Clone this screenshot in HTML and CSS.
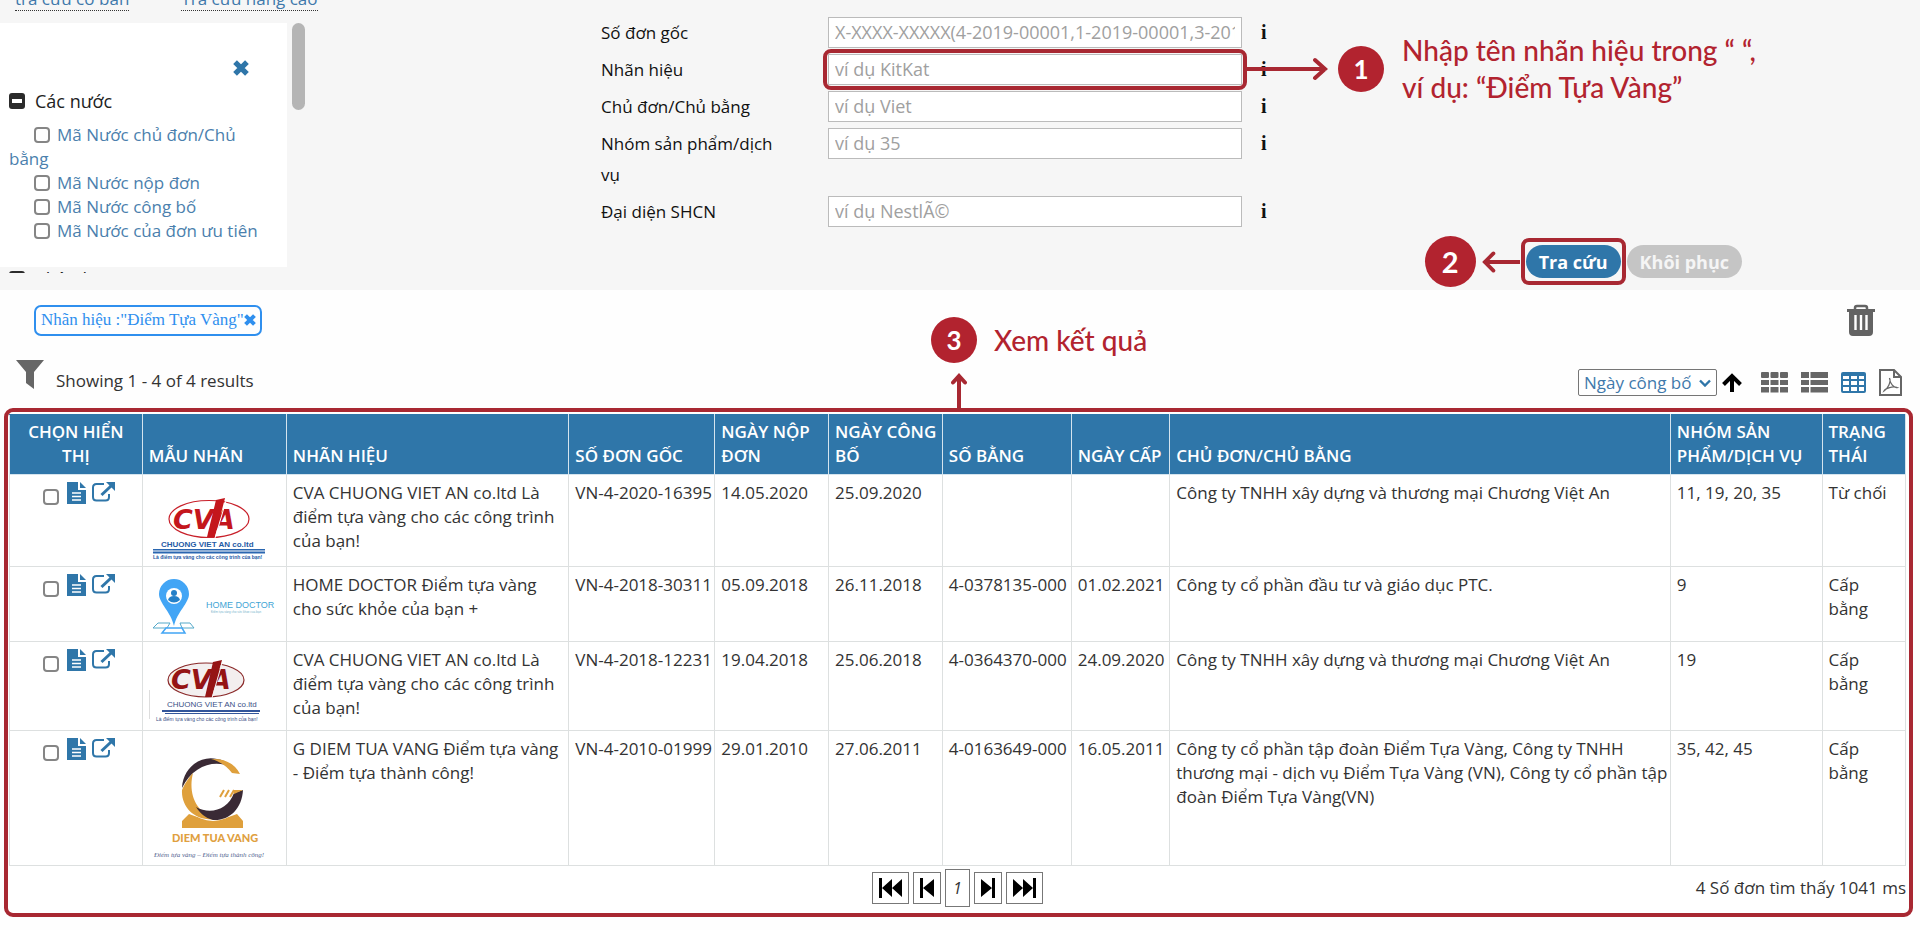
FILE: index.html
```html
<!DOCTYPE html>
<html lang="vi">
<head>
<meta charset="utf-8">
<title>Tra cứu nhãn hiệu</title>
<link rel="stylesheet" href="styles.css">
</head>
<body>
<svg class="defs" aria-hidden="true">
  <symbol id="doc" viewBox="0 0 19 22"><path fill="#2f76a9" d="M0 0h11v8h8v14H0z"/><path fill="#2f76a9" d="M13 0l6 6h-6z"/><path stroke="#fff" stroke-width="1.6" d="M5 11h9M5 14.500h9M5 18h9"/></symbol>
  <symbol id="open" viewBox="0 0 23 20"><path fill="none" stroke="#2f76a9" stroke-width="2" d="M12 2H4.500Q1 2 1 5.500v9.500Q1 18.500 4.500 18.500h9Q17 18.500 17 15v-3"/><path stroke="#2f76a9" stroke-width="3" d="M9.500 13L19 4"/><path fill="#2f76a9" d="M14 0h9v9z"/></symbol>
  <symbol id="cross" viewBox="0 0 14 14"><path stroke="currentColor" stroke-width="4.600" d="M1.800 1.800l10.400 10.400M12.200 1.800L1.800 12.200"/></symbol>
  <symbol id="minus" viewBox="0 0 16 16"><rect width="16" height="16" rx="3" fill="#2b2b2b"/><rect x="3" y="6" width="10" height="4" fill="#fff"/></symbol>
</svg>

<header class="search">
  <aside class="side">
    <nav class="tabs"><a href="#basic">tra cứu cơ bản</a><a href="#advanced">Tra cứu nâng cao</a></nav>
    <div class="facets">
      <section class="facet">
        <button class="close" type="button" aria-label="Đóng"><svg><use href="#cross"/></svg></button>
        <h2><svg><use href="#minus"/></svg>Các nước</h2>
        <ul>
          <li><input type="checkbox" id="f1"><label for="f1">Mã Nước chủ đơn/Chủ bằng</label></li>
          <li><input type="checkbox" id="f2"><label for="f2">Mã Nước nộp đơn</label></li>
          <li><input type="checkbox" id="f3"><label for="f3">Mã Nước công bố</label></li>
          <li><input type="checkbox" id="f4"><label for="f4">Mã Nước của đơn ưu tiên</label></li>
        </ul>
      </section>
      <h2 class="next"><svg><use href="#minus"/></svg>Phân loại</h2>
      <span class="thumb"></span>
    </div>
  </aside>

  <form class="fields">
    <div class="field"><label for="q1">Số đơn gốc</label><span class="box"><input id="q1" type="text" placeholder="X-XXXX-XXXXX(4-2019-00001,1-2019-00001,3-2019-00001)"></span><b>i</b></div>
    <div class="field"><label for="q2">Nhãn hiệu</label><span class="box marked"><input id="q2" type="text" placeholder="ví dụ KitKat">
      <span class="note note-one">
        <svg class="arrow-right" viewBox="0 0 81 24"><path d="M0 12h78M68 3l10 9-10 9"/></svg>
        <span class="badge">1</span>
        <span class="hint">Nhập tên nhãn hiệu trong “ “,<br>ví dụ: “Điểm Tựa Vàng”</span>
      </span></span><b>i</b></div>
    <div class="field"><label for="q3">Chủ đơn/Chủ bằng</label><span class="box"><input id="q3" type="text" placeholder="ví dụ Viet"></span><b>i</b></div>
    <div class="field"><label for="q4">Nhóm sản phẩm/dịch vụ</label><span class="box"><input id="q4" type="text" placeholder="ví dụ 35"></span><b>i</b></div>
    <div class="field"><label for="q5">Đại diện SHCN</label><span class="box"><input id="q5" type="text" placeholder="ví dụ NestlÃ©"></span><b>i</b></div>
  </form>

  <div class="actions">
    <span class="badge big">2</span>
    <svg class="arrow-left" viewBox="0 0 40 24"><path d="M40 12H3M12 3L3 12l9 9"/></svg>
    <span class="marked"><button class="pill go" type="button">Tra cứu</button></span>
    <button class="pill reset" type="button">Khôi phục</button>
  </div>
</header>

<main>
  <div class="bar filters">
    <span class="tag">Nhãn hiệu :"Điểm Tựa Vàng"<button type="button" aria-label="Xóa"><svg><use href="#cross"/></svg></button></span>
    <button class="trash" type="button" aria-label="Xóa tất cả"><svg viewBox="0 0 28 32"><path fill="none" stroke="#636363" stroke-width="2.500" d="M8 6V4q0-2 2-2h8q2 0 2 2v2"/><path fill="#636363" d="M0 5h28v3h-2v20q0 4-4 4H6q-4 0-4-4V8H0z"/><path stroke="#fff" stroke-width="2.400" d="M8.500 11v15M14 11v15M19.500 11v15"/></svg></button>
  </div>
  <div class="bar tools">
    <svg class="funnel" viewBox="0 0 28 29"><path fill="#666" d="M0 0h28L18 12v17l-8-6V12z"/></svg>
    <span class="count">Showing 1 - 4 of 4 results</span>
    <div class="views">
      <label class="sort"><select aria-label="Sắp xếp"><option>Ngày công bố</option></select><svg viewBox="0 0 12 8"><path fill="none" stroke="#2f76a9" stroke-width="2.400" d="M1 1.500l5 5 5-5"/></svg></label>
      <button class="dir" type="button" aria-label="Tăng dần"><svg viewBox="0 0 20 19"><path fill="none" stroke="#000" stroke-width="4" d="M10 19V4M1.500 11.500L10 3l8.500 8.500"/></svg></button>
      <button type="button" aria-label="Lưới"><svg viewBox="0 0 27 21"><path fill="#666" d="M1 0h6q1 0 1 1v4q0 1-1 1H1q-1 0-1-1V1q0-1 1-1zM10.500 0h6q1 0 1 1v4q0 1-1 1h-6q-1 0-1-1V1q0-1 1-1zM20 0h6q1 0 1 1v4q0 1-1 1h-6q-1 0-1-1V1q0-1 1-1zM0 8h8v5H0zM9.500 8h8v5h-8zM19 8h8v5h-8zM0 15h8v5.500H0zM9.500 15h8v5.500h-8zM19 15h8v5.500h-8z"/></svg></button>
      <button type="button" aria-label="Danh sách"><svg viewBox="0 0 27 21"><path fill="#666" d="M0 0h8v6H0zM9.500 0H27v6H9.500zM0 8h8v5H0zM9.500 8H27v5H9.500zM0 15h8v5.500H0zM9.500 15H27v5.500H9.500z"/></svg></button>
      <button type="button" aria-label="Bảng"><svg viewBox="0 0 25 21"><rect width="25" height="21" rx="2" fill="#2f76a9"/><path fill="#fff" d="M2 4h6v3H2zM10 4h6v3h-6zM18 4h5v3h-5zM2 9h6v4H2zM10 9h6v4h-6zM18 9h5v4h-5zM2 15h6v4H2zM10 15h6v4h-6zM18 15h5v4h-5z"/></svg></button>
      <button class="pdf" type="button" aria-label="PDF"><svg viewBox="0 0 23 27"><path fill="none" stroke="#666" stroke-width="2" d="M1 1h14l7 7v18H1zM15 1v7h7"/><path fill="none" stroke="#666" stroke-width="1.300" d="M10.500 9c2 4-2 11-5.500 13 1.500-3 9-5 13-3.500-3 .5-7-3.500-7.500-9.500"/></svg></button>
    </div>
    <span class="note note-three">
      <span class="badge">3</span><span class="hint">Xem kết quả</span>
      <svg class="arrow-up" viewBox="0 0 16 36"><path d="M8 36V3M2 9.500L8 3l6 6.500"/></svg>
    </span>
  </div>

  <section class="results">
    <table>
      <colgroup><col class="c1"><col class="c2"><col class="c3"><col class="c4"><col class="c5"><col class="c6"><col class="c7"><col class="c8"><col class="c9"><col class="c10"><col class="c11"></colgroup>
      <thead><tr><th class="pick">CHỌN HIỂN THỊ</th><th>MẪU NHÃN</th><th>NHÃN HIỆU</th><th>SỐ ĐƠN GỐC</th><th>NGÀY NỘP ĐƠN</th><th>NGÀY CÔNG BỐ</th><th>SỐ BẰNG</th><th>NGÀY CẤP</th><th>CHỦ ĐƠN/CHỦ BẰNG</th><th>NHÓM SẢN PHẨM/DỊCH VỤ</th><th>TRẠNG THÁI</th></tr></thead>
      <tbody>
        <tr>
          <td><div class="ops"><input type="checkbox" aria-label="Chọn 1"><svg class="doc"><use href="#doc"/></svg><svg class="open"><use href="#open"/></svg></div></td>
          <td><svg class="logo" viewBox="0 0 130 79">
            <ellipse cx="60" cy="38" rx="40" ry="18.500" fill="#fff" stroke="#c8202a" stroke-width="1.200"/>
            <text x="24" y="48" class="cva" fill="#c4161c">CV</text><text x="65" y="48" class="cva" fill="#c4161c">A</text>
            <path fill="#c4161c" d="M76 17l-9 2L58 56h8z"/><path stroke="#fff" d="M77 20L66 57"/>
            <text x="12" y="66" class="firm" fill="#1f5aa5">CHUONG VIET AN co.ltd</text>
            <path fill="#2a66b0" d="M4 68h112v1.500H4zM4 70.500h112v2H4z"/>
            <text x="4" y="78" class="motto" fill="#1f5aa5">Là điểm tựa vàng cho các công trình của bạn!</text></svg></td>
          <td>CVA CHUONG VIET AN co.ltd Là điểm tựa vàng cho các công trình của bạn!</td><td>VN-4-2020-16395</td><td>14.05.2020</td><td>25.09.2020</td><td></td><td></td><td>Công ty TNHH xây dựng và thương mại Chương Việt An</td><td>11, 19, 20, 35</td><td>Từ chối</td>
        </tr>
        <tr>
          <td><div class="ops"><input type="checkbox" aria-label="Chọn 2"><svg class="doc"><use href="#doc"/></svg><svg class="open"><use href="#open"/></svg></div></td>
          <td><svg class="logo" viewBox="0 0 130 62">
            <path fill="#fff" stroke="#55a9c9" stroke-width="1" d="M9 50h12l-3 5H4zM31 50h10l4 5H33z"/><path fill="#fff" stroke="#42a5f5" stroke-width="1.500" d="M17 55h16l3 5H13z"/>
            <path fill="#42a5f5" d="M25 53C22 39 10 30 10 21a15 15 0 0 1 30 0c0 9-12 18-15 32z"/>
            <circle cx="25" cy="23" r="8" fill="#fff"/><circle cx="25" cy="20" r="3" fill="#2480c8"/><path fill="#2480c8" d="M19 27q1-4 6-4t6 4q-6 5-12 0z"/>
            <text x="57" y="35" class="home" fill="#42a5d5">HOME DOCTOR</text>
            <text x="62" y="40" class="tiny" fill="#77b3cc">Điểm tựa vàng cho sức khỏe của bạn</text></svg></td>
          <td>HOME DOCTOR Điểm tựa vàng cho sức khỏe của bạn +</td><td>VN-4-2018-30311</td><td>05.09.2018</td><td>26.11.2018</td><td>4-0378135-000</td><td>01.02.2021</td><td>Công ty cổ phần đầu tư và giáo dục PTC.</td><td>9</td><td>Cấp bằng</td>
        </tr>
        <tr>
          <td><div class="ops"><input type="checkbox" aria-label="Chọn 3"><svg class="doc"><use href="#doc"/></svg><svg class="open"><use href="#open"/></svg></div></td>
          <td><svg class="logo" viewBox="0 0 130 76">
            <path stroke="#ddd" d="M.5 42v29"/>
            <ellipse cx="57" cy="32" rx="38" ry="17" fill="#f3efef" stroke="#8b2a2a" stroke-width="1.200"/>
            <text x="22" y="41" class="cva" fill="#951414">CV</text><text x="61" y="41" class="cva" fill="#951414">A</text>
            <path fill="#951414" d="M73 12l-9 2L56 49h7z"/><path stroke="#f3efef" d="M73 15L63 50"/>
            <text x="18" y="59" class="firm small" fill="#3b4f86">CHUONG VIET AN co.ltd</text>
            <path fill="#33569b" d="M13 62h98v2H13zM16 65h94v1H16z"/>
            <text x="7" y="73" class="motto small" fill="#3b4f86">Là điểm tựa vàng cho các công trình của bạn!</text></svg></td>
          <td>CVA CHUONG VIET AN co.ltd Là điểm tựa vàng cho các công trình của bạn!</td><td>VN-4-2018-12231</td><td>19.04.2018</td><td>25.06.2018</td><td>4-0364370-000</td><td>24.09.2020</td><td>Công ty TNHH xây dựng và thương mại Chương Việt An</td><td>19</td><td>Cấp bằng</td>
        </tr>
        <tr>
          <td><div class="ops"><input type="checkbox" aria-label="Chọn 4"><svg class="doc"><use href="#doc"/></svg><svg class="open"><use href="#open"/></svg></div></td>
          <td><svg class="logo" viewBox="0 0 130 122">
            <path fill="#dfa03c" d="M33 91v-7l7-7q24 10 48 0l6 7v7z"/>
            <circle cx="64" cy="52" r="32" fill="#fff"/>
            <path fill="#3a2a35" d="M33 51C34 30 52 18 68 22c8 1 12 5 14 8C66 22 44 28 33 51z"/>
            <path fill="#dfa03c" d="M62 22c14-1 24 5 29 15l-8-1C78 29 70 24 62 22zM33 53c4-9 9-15 11-17-5 20 2 40 24 46C46 85 32 70 33 53z"/>
            <path fill="#3a2a35" d="M47 70c14 8 32 3 38-14l9-3C93 72 80 84 64 83c-8-2-13-7-17-13z"/>
            <path fill="#dfa03c" d="M84 53h10l-9 4z"/><path stroke="#dfa03c" stroke-width="2" d="M75 53l-4 7M80 53l-4 7M85 53l-4 7"/>
            <text x="23" y="105" class="gold" fill="#e0a040">DIEM TUA VANG</text>
            <text x="5" y="120" class="script" fill="#53658f">Điểm tựa vàng – Điểm tựa thành công!</text></svg></td>
          <td>G DIEM TUA VANG Điểm tựa vàng - Điểm tựa thành công!</td><td>VN-4-2010-01999</td><td>29.01.2010</td><td>27.06.2011</td><td>4-0163649-000</td><td>16.05.2011</td><td>Công ty cổ phần tập đoàn Điểm Tựa Vàng, Công ty TNHH thương mại - dịch vụ Điểm Tựa Vàng (VN), Công ty cổ phần tập đoàn Điểm Tựa Vàng(VN)</td><td>35, 42, 45</td><td>Cấp bằng</td>
        </tr>
      </tbody>
    </table>
    <footer class="pager">
      <nav>
        <button type="button" aria-label="Trang đầu"><svg class="wide" viewBox="0 0 23 20"><path d="M0 0h3v20H0zM13 1v18L3 10zM23 1v18l-10-9z"/></svg></button>
        <button type="button" aria-label="Trang trước"><svg viewBox="0 0 14 20"><path d="M0 0h3v20H0zM14 1v18L3 10z"/></svg></button>
        <input type="text" value="1" aria-label="Trang">
        <button type="button" aria-label="Trang sau"><svg viewBox="0 0 14 20"><path d="M11 0h3v20h-3zM0 1v18l11-9z"/></svg></button>
        <button type="button" aria-label="Trang cuối"><svg class="wide" viewBox="0 0 23 20"><path d="M20 0h3v20h-3zM0 1v18l10-9zM10 1v18l10-9z"/></svg></button>
      </nav>
      <span>4 Số đơn tìm thấy 1041 ms</span>
    </footer>
  </section>
</main>
</body>
</html>
```

FILE: styles.css
```css
* { box-sizing: border-box; }
body { margin: 0; background: #fefefe; color: #333; font: 17px/24px "Open Sans", "Noto Sans", sans-serif; }
button { padding: 0; border: 0; background: none; font: inherit; color: inherit; }
svg { display: block; flex: none; }
input[type="checkbox"] { appearance: none; flex: none; width: 16px; height: 16px; margin: 0; border: 2px solid #858585; border-radius: 4px; background: #fff; }
.defs { position: absolute; width: 0; height: 0; }

/* search area */
.search { display: grid; grid-template-columns: 601fr 667fr 652fr; min-height: 290px; background: #f6f6f6; }
.tabs { display: flex; align-items: flex-end; gap: 52px; height: 11px; padding-left: 15px; overflow: hidden; }
.tabs a { border-bottom: 1px dotted #333; color: #3f79ab; text-decoration: none; line-height: 22px; }
.facets { position: relative; width: 310px; height: 250px; margin-top: 12px; overflow: hidden; }
.facet { width: 287px; height: 244px; padding: 0 9px; background: #fff; }
.close { display: block; margin-left: 224px; padding-top: 37px; color: #2f76a9; }
.close svg { width: 16px; height: 16px; }
.facets h2 { display: flex; align-items: center; gap: 10px; margin: 0; font-size: 18px; font-weight: 400; color: #222; }
.facet h2 { padding-top: 13px; }
.next { padding: 0 9px; }
.facets h2 svg { width: 16px; height: 16px; }
.facet ul { margin: 10px 0 0; padding: 0; list-style: none; line-height: 24px; color: #4b7fad; }
.facet li input { margin: 0 7px 0 25px; vertical-align: -2px; }
.thumb { position: absolute; top: 0; right: 5px; width: 13px; height: 87px; border-radius: 7px; background: #b5b5b5; }
.fields { display: flex; flex-direction: column; gap: 6px; padding-top: 17px; }
.field { display: flex; line-height: 31px; color: #111; }
.field label { width: 227px; padding-right: 40px; }
.box { position: relative; flex: 1; height: 31px; }
.box input { display: block; width: 100%; height: 31px; padding: 0 6px; border: 1px solid #bbb; background: #fff; font: inherit; font-size: 18px; }
.box input::placeholder { color: #a0a0a0; }
.field b { width: 26px; padding-left: 19px; font: 700 20px/31px "Liberation Serif", serif; }
.marked { position: relative; }
.marked::after { content: ""; position: absolute; inset: -5px; border: 4px solid #a82832; border-radius: 8px; pointer-events: none; }
.actions { display: flex; align-items: center; justify-content: flex-end; gap: 6px; padding: 236px 178px 3px 0; }
.pill { display: block; height: 33px; padding: 0 13px; border-radius: 17px; color: #fff; font-size: 18px; font-weight: 700; }
.go { background: #2f76a9; }
.reset { background: #c5c5c5; color: #f5f5f5; }
.actions .marked::after { inset: -7px -5px; }

/* tutorial callouts */
.badge { display: flex; flex: none; align-items: center; justify-content: center; width: 46px; height: 46px; border-radius: 50%; background: #b2232f; color: #fff; font: 700 26px/46px Lato, sans-serif; }
.badge.big { width: 51px; height: 51px; font-size: 29px; }
.hint { color: #b2232f; font: 500 28px/37px Lato, sans-serif; white-space: nowrap; }
.note { position: absolute; display: flex; align-items: center; }
.note-one { left: 100%; bottom: -21px; margin-left: 5px; z-index: 1; }
.note-one .badge { margin: 0 18px 0 10px; }
.note-three { left: 931px; bottom: 45px; gap: 17px; }
.arrow-right, .arrow-left, .arrow-up { fill: none; stroke: #a82832; stroke-width: 4; stroke-linecap: round; }
.arrow-right { width: 81px; height: 24px; }
.arrow-left { width: 38px; height: 24px; }
.arrow-up { position: absolute; top: 56px; left: 20px; width: 16px; height: 36px; }

/* result toolbar */
.bar { position: relative; display: flex; }
.filters { align-items: center; justify-content: space-between; padding: 14px 45px 0 34px; }
.tag { display: flex; align-items: center; height: 31px; padding: 0 4px 0 5px; border: 2px solid #2f8fee; border-radius: 7px; color: #2f8fee; font: 17px/24px "Liberation Serif", serif; }
.tag svg { width: 12px; height: 12px; }
.trash svg { width: 28px; height: 32px; }
.tools { align-items: flex-start; height: 72px; padding: 24px 18px 0 16px; }
.funnel { width: 28px; height: 29px; }
.count { margin-left: 12px; padding-top: 9px; }
.views { display: flex; align-items: center; gap: 13px; margin-left: auto; padding-top: 9px; }
.sort { position: relative; }
.sort select { appearance: none; display: block; width: 139px; height: 27px; padding: 0 5px; border: 1px solid #767676; border-radius: 2px; background: #fff; color: #3f79ab; font: inherit; }
.sort svg { position: absolute; right: 6px; top: 10px; width: 12px; height: 8px; }
.dir { margin: 0 6px 0 -8px; }
.dir svg { width: 20px; height: 19px; }
.views button svg { height: 21px; }
.views .pdf svg { width: 23px; height: 27px; }

/* results */
.results { margin: 0 7px 0 4px; padding: 2px 3px 0 1px; border: 4px solid #a82832; border-radius: 9px; background: #fff; }
table { width: 100%; table-layout: fixed; border-collapse: collapse; }
.c1 { width: 7%; } .c2 { width: 7.600%; } .c3 { width: 14.900%; } .c4 { width: 7.700%; } .c5 { width: 6%; } .c6 { width: 6%; }
.c7 { width: 6.800%; } .c8 { width: 5.200%; } .c9 { width: 26.400%; } .c10 { width: 8%; } .c11 { width: 4.400%; }
th, td { padding: 6px 0 6px 6px; border: 1px solid #dde0e0; text-align: left; vertical-align: top; }
th { height: 60px; padding-top: 5px; background: #2f76a9; border-color: #2f76a9 #d5e4ee #d5e4ee; color: #fff; font-weight: 600; vertical-align: bottom; }
th.pick { padding: 5px 12px 6px; text-align: center; }
td:nth-child(3), td:last-child { padding-right: 8px; }
.ops { display: flex; align-items: flex-start; padding-left: 27px; }
.ops input { margin: 8px 8px 0 0; }
.doc { width: 19px; height: 22px; margin: 1px 6px 0 0; }
.open { width: 23px; height: 20px; margin-top: 1px; }
.logo { width: 100%; max-width: 130px; height: auto; }
.cva { font: italic 700 27px "DejaVu Sans", sans-serif; }
.firm { font: 700 8px "Liberation Sans", sans-serif; }
.motto { font: 700 5px "Liberation Sans", sans-serif; }
.small { font-weight: 400; }
.home { font: 9px "Liberation Sans", sans-serif; }
.tiny { font: 3px "Liberation Sans", sans-serif; }
.gold { font: 900 11px Lato, sans-serif; }
.script { font: italic 7px "Liberation Serif", serif; }
.pager { display: grid; grid-template-columns: 1fr auto 1fr; align-items: center; height: 47px; padding-bottom: 4px; }
.pager nav { grid-column: 2; display: flex; align-items: center; gap: 4px; }
.pager button { display: flex; align-items: center; justify-content: center; height: 32px; padding: 0 6px; border: 1px solid #777; background: #fff; }
.pager svg { width: 14px; height: 20px; }
.pager svg.wide { width: 23px; }
.pager input { width: 25px; height: 38px; padding: 0; border: 1px solid #777; color: #333; font: italic 16px "Open Sans", sans-serif; text-align: center; }
.pager > span { justify-self: end; }
```
